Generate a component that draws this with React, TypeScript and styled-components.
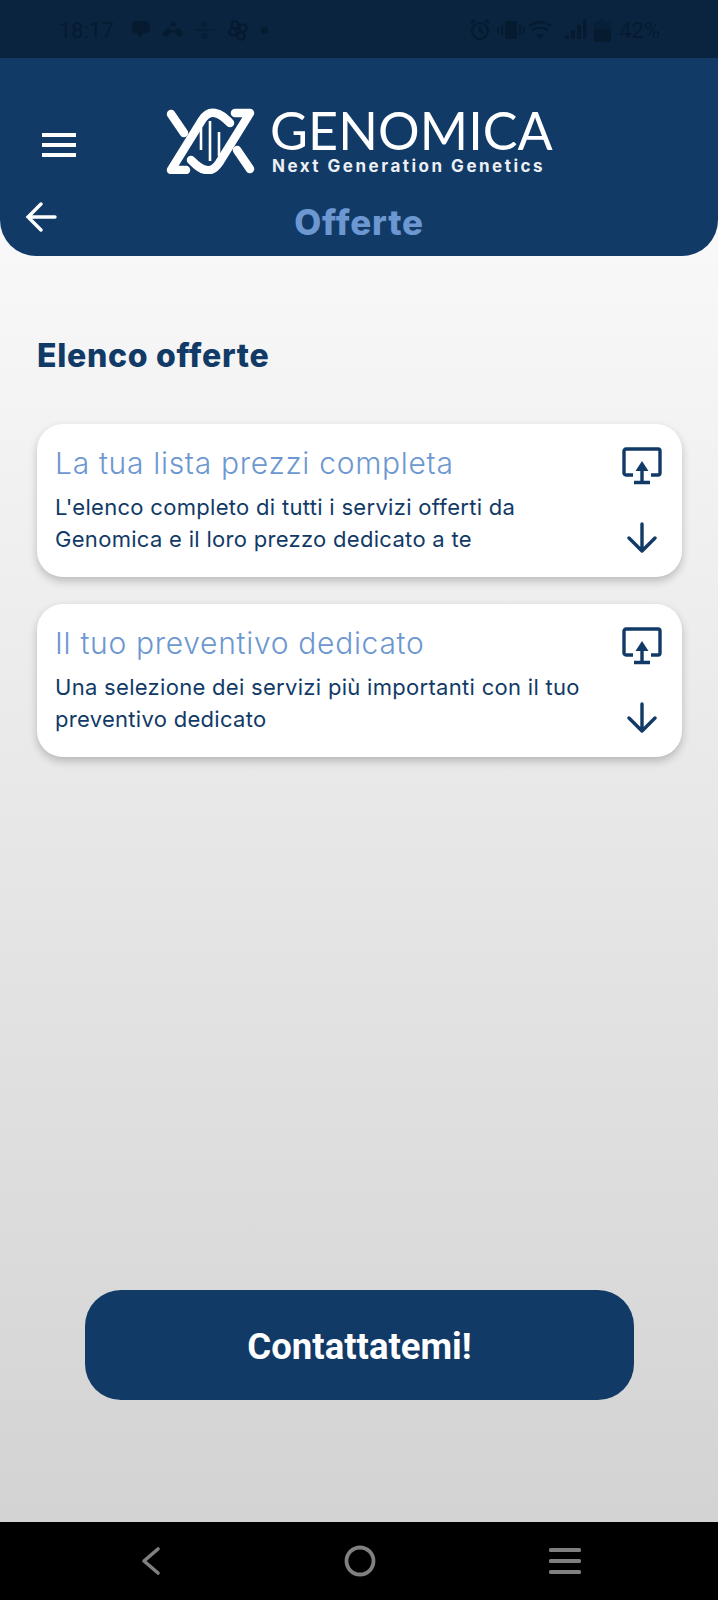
import React from "react";
import styled, { createGlobalStyle } from "styled-components";

const navy = "#113a67";
const sky = "#6d97d0";
const dim = "#061a30";

const GlobalStyle = createGlobalStyle`
  html, body {
    margin: 0;
    padding: 0;
    background: #000;
  }
  * {
    box-sizing: border-box;
  }
`;

const offers = [
  {
    title: "La tua lista prezzi completa",
    lines: ["L'elenco completo di tutti i servizi offerti da", "Genomica e il loro prezzo dedicato a te"],
  },
  {
    title: "Il tuo preventivo dedicato",
    lines: ["Una selezione dei servizi più importanti con il tuo", "preventivo dedicato"],
  },
];

const ScreenIcon = () => (
  <svg width="42" height="38" viewBox="0 0 42 38" fill="none" stroke={navy} strokeWidth="3.4">
    <path d="M12 28H5a2 2 0 0 1-2-2V4a2 2 0 0 1 2-2h32a2 2 0 0 1 2 2v22a2 2 0 0 1-2 2h-7" strokeLinejoin="round" />
    <path d="M21 17v17M13 35.5h16" />
    <path d="M14.5 24l6.5-10 6.500 10z" fill={navy} stroke="none" />
  </svg>
);

const DownIcon = () => (
  <svg width="30" height="32" viewBox="0 0 30 32" fill="none" stroke={navy} strokeWidth="3.4" strokeLinecap="round" strokeLinejoin="round">
    <path d="M15 2v27M2 16l13 13 13-13" />
  </svg>
);

const DnaLogo = () => (
  <svg width="94" height="66" viewBox="10 8 94 66" fill="none">
    <g stroke="#fff" strokeWidth="8.5" strokeLinecap="round" strokeLinejoin="round">
      <path d="M16 14L29 33" />
      <path d="M95 69L82 50" />
      <path d="M31 70H16L47 20C51 14 55 12 60 13C66 14 70 18 75 23" />
      <path d="M80 13H95L64 63C60 69 56 71 51 70C45 69 41 65 36 60" />
    </g>
    <g stroke="#fff" strokeWidth="2.6">
      <path d="M46 28v22M55 21v40M64 32v24" />
    </g>
  </svg>
);

const HamburgerIcon = () => (
  <svg width="34" height="24" viewBox="0 0 34 24" fill="#fff">
    <rect y="0" width="34" height="4" />
    <rect y="10" width="34" height="4" />
    <rect y="20" width="34" height="4" />
  </svg>
);

const BackIcon = () => (
  <svg width="32" height="30" viewBox="0 0 32 30" fill="none" stroke="#fff" strokeWidth="3.4" strokeLinecap="round">
    <path d="M30 15H3M16 2L3 15l13 13" />
  </svg>
);

const StatusLeftIcons = () => (
  <svg width="118" height="22" viewBox="0 0 118 22" fill={dim}>
    <path d="M4 2h10c3 0 5 2 5 5v2c0 3-2 5-5 5h-2l-3 5-3-5H4c-2 0-3-2-3-5V7c0-3 1-5 3-5z" />
    <circle cx="42" cy="5" r="2.600" />
    <path d="M32 16c0-4 3-6 5-7l5 3 5-3c3 1 5 3 5 7l-4 2-3-4-3-1-3 1-3 4z" />
    <path d="M63 10h21v2H63z" opacity=".6" />
    <circle cx="73.500" cy="5" r="3" opacity=".6" />
    <circle cx="73.500" cy="17" r="3" opacity=".6" />
    <g fill="none" stroke={dim} strokeWidth="2.400">
      <circle cx="104" cy="6" r="3.600" />
      <circle cx="112" cy="9" r="3.600" />
      <circle cx="102" cy="13" r="3.600" />
      <circle cx="110" cy="17" r="3.600" />
    </g>
  </svg>
);

const StatusRightIcons = () => (
  <svg width="143" height="26" viewBox="0 0 143 26" fill={dim}>
    <g fill="none" stroke={dim} strokeWidth="2.200">
      <circle cx="11" cy="14" r="8" />
      <path d="M11 9v5l3 2M2 6l4-3M20 6l-4-3" />
    </g>
    <rect x="36" y="4" width="12" height="18" rx="2" />
    <path d="M32 8h2v10h-2zM28 10h2v6h-2zM50 8h2v10h-2zM54 10h2v6h-2z" />
    <g fill="none" stroke={dim} strokeWidth="2.400" strokeDasharray="17 2">
      <path d="M60 9c7-5 15-5 22 0M63 13c5-3 11-3 16 0" />
    </g>
    <path d="M67 17h8l-4 5z" />
    <rect x="96" y="18" width="4" height="4" />
    <rect x="102" y="13" width="4" height="9" />
    <rect x="108" y="8" width="4" height="14" />
    <rect x="114" y="2" width="3.500" height="20" />
    <path d="M131 1h5v3h4a2 2 0 0 1 2 2v17a2 2 0 0 1-2 2h-13a2 2 0 0 1-2-2V6a2 2 0 0 1 2-2h4z" opacity=".45" />
    <path d="M125 12h17v11a2 2 0 0 1-2 2h-13a2 2 0 0 1-2-2z" />
  </svg>
);

const App = () => {
  return (
    <Phone>
      <GlobalStyle />
      <StatusBar>
        <StatusGroup $gap={17}>
          <StatusText>18:17</StatusText>
          <StatusLeftIcons />
          <Dot />
        </StatusGroup>
        <StatusGroup $gap={7}>
          <StatusRightIcons />
          <StatusText>42%</StatusText>
        </StatusGroup>
      </StatusBar>
      <Header>
        <TopRow>
          <MenuSlot>
            <HamburgerIcon />
          </MenuSlot>
          <Logo>
            <DnaLogo />
            <Wordmark>
              <Brand>GENOMICA</Brand>
              <Tagline>Next Generation Genetics</Tagline>
            </Wordmark>
          </Logo>
        </TopRow>
        <TitleRow>
          <BackSlot>
            <BackIcon />
          </BackSlot>
          <Title>Offerte</Title>
        </TitleRow>
      </Header>
      <Content>
        <Heading>Elenco offerte</Heading>
        <CardList>
          {offers.map((offer) => (
            <Card key={offer.title}>
              <CardText>
                <CardTitle>{offer.title}</CardTitle>
                <CardBody>
                  {offer.lines.map((line) => (
                    <div key={line}>{line}</div>
                  ))}
                </CardBody>
              </CardText>
              <CardIcons>
                <ScreenIcon />
                <DownIcon />
              </CardIcons>
            </Card>
          ))}
        </CardList>
        <ContactButton>Contattatemi!</ContactButton>
      </Content>
      <NavBar>
        <svg width="31" height="30" viewBox="0 0 31 30" fill="none" stroke="#808080" strokeWidth="3.6" strokeLinecap="round" strokeLinejoin="round">
          <path d="M18 3L4 15l14 12" />
        </svg>
        <svg width="32" height="32" viewBox="0 0 32 32" fill="none" stroke="#808080" strokeWidth="3.8">
          <circle cx="16" cy="16" r="13.5" />
        </svg>
        <svg width="32" height="26" viewBox="0 0 32 26" fill="#808080">
          <rect y="0" width="32" height="4" rx="1.5" />
          <rect y="11" width="32" height="4" rx="1.5" />
          <rect y="22" width="32" height="4" rx="1.5" />
        </svg>
      </NavBar>
    </Phone>
  );
};

export default App;

const Phone = styled.div`
  width: 718px;
  height: 1600px;
  display: flex;
  flex-direction: column;
  overflow: hidden;
  background: linear-gradient(#f8f8f8 250px, #d3d3d3 1520px);
`;

const StatusBar = styled.div`
  height: 58px;
  flex: none;
  background: #0a2440;
  display: flex;
  align-items: center;
  justify-content: space-between;
  padding: 2px 58px 0 59px;
`;

const StatusGroup = styled.div<{ $gap: number }>`
  display: flex;
  align-items: center;
  gap: ${(props) => props.$gap}px;
`;

const StatusText = styled.span`
  font-family: Roboto, sans-serif;
  font-size: 22px;
  color: ${dim};
`;

const Dot = styled.span`
  width: 7px;
  height: 7px;
  margin-left: -5px;
  border-radius: 50%;
  background: ${dim};
`;

const Header = styled.header`
  height: 198px;
  flex: none;
  background: ${navy};
  border-radius: 0 0 36px 36px;
  display: flex;
  flex-direction: column;
  padding-top: 50px;
`;

const TopRow = styled.div`
  display: flex;
  align-items: center;
`;

const MenuSlot = styled.div`
  width: 165px;
  padding: 8px 0 0 42px;
  flex: none;
  display: flex;
`;

const Logo = styled.div`
  display: flex;
  align-items: center;
  gap: 11px;
`;

const Wordmark = styled.div`
  display: flex;
  flex-direction: column;
`;

const Brand = styled.div`
  font-family: Lato, sans-serif;
  font-weight: 400;
  font-size: 52px;
  line-height: 44px;
  color: #fff;
  letter-spacing: 0.1px;
`;

const Tagline = styled.div`
  margin-top: 6px;
  padding-left: 2px;
  font-family: Inter, sans-serif;
  font-weight: 700;
  font-size: 17px;
  line-height: 16px;
  letter-spacing: 2.5px;
  white-space: nowrap;
  color: #fff;
  opacity: 0.92;
`;

const TitleRow = styled.div`
  position: relative;
  display: flex;
  justify-content: center;
  margin-top: 27px;
`;

const BackSlot = styled.div`
  position: absolute;
  left: 25px;
  top: 1px;
`;

const Title = styled.h1`
  margin: 0;
  font-family: Inter, sans-serif;
  font-weight: 800;
  font-size: 35px;
  line-height: 42px;
  letter-spacing: 0.8px;
  color: ${sky};
`;

const Content = styled.main`
  flex: 1;
  display: flex;
  flex-direction: column;
  padding: 0 36px 122px 37px;
`;

const Heading = styled.h2`
  margin: 78px 0 0;
  font-family: Inter, sans-serif;
  font-weight: 800;
  font-size: 32px;
  line-height: 44px;
  letter-spacing: 0.7px;
  color: ${navy};
`;

const CardList = styled.div`
  display: flex;
  flex-direction: column;
  gap: 27px;
  margin-top: 46px;
`;

const Card = styled.section`
  height: 153px;
  background: #fff;
  border-radius: 26px;
  box-shadow: 0 4px 8px rgba(0, 0, 0, 0.22);
  display: flex;
  justify-content: space-between;
  padding: 20px 19px 0 18px;
`;

const CardText = styled.div`
  display: flex;
  flex-direction: column;
`;

const CardTitle = styled.h3`
  margin: 0;
  font-family: Inter, sans-serif;
  font-weight: 300;
  font-size: 30px;
  line-height: 38px;
  letter-spacing: 0.7px;
  color: ${sky};
`;

const CardBody = styled.div`
  margin-top: 9px;
  font-family: Inter, sans-serif;
  font-weight: 400;
  font-size: 22px;
  line-height: 32px;
  letter-spacing: 0.3px;
  color: ${navy};
`;

const CardIcons = styled.div`
  display: flex;
  flex-direction: column;
  align-items: center;
  gap: 37px;
  padding-top: 3px;
`;

const ContactButton = styled.button`
  align-self: center;
  margin-top: auto;
  width: 549px;
  height: 110px;
  flex: none;
  border: none;
  border-radius: 36px;
  padding-top: 3px;
  background: ${navy};
  color: #fff;
  font-family: Roboto, sans-serif;
  font-weight: 700;
  font-size: 36.5px;
`;

const NavBar = styled.nav`
  height: 78px;
  flex: none;
  background: #000;
  display: flex;
  align-items: center;
  justify-content: space-between;
  padding: 0 137px 0 140px;
`;
